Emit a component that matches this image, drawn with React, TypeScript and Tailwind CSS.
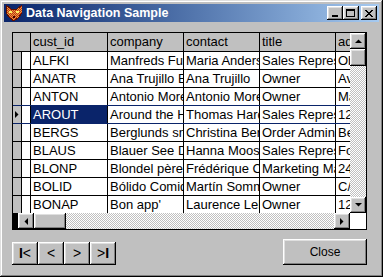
import React from 'react';

const raised =
  'bg-[#c0c0c0] shadow-[inset_-1px_-1px_#000,inset_1px_1px_#fff,inset_-2px_-2px_#808080,inset_2px_2px_#dfdfdf]';

const track = 'bg-[repeating-conic-gradient(#c0c0c0_0_25%,#fff_0_50%)] bg-[length:2px_2px]';

const rows = [
  ['ALFKI', 'Manfreds Futterkiste', 'Maria Anders', 'Sales Representative', 'Obere Str. 57'],
  ['ANATR', 'Ana Trujillo Emparedados', 'Ana Trujillo', 'Owner', 'Avda. de la Constitución 2222'],
  ['ANTON', 'Antonio Moreno Taquería', 'Antonio Moreno', 'Owner', 'Mataderos 2312'],
  ['AROUT', 'Around the Horn', 'Thomas Hardy', 'Sales Representative', '120 Hanover Sq.'],
  ['BERGS', 'Berglunds snabbköp', 'Christina Berglund', 'Order Administrator', 'Berguvsvägen 8'],
  ['BLAUS', 'Blauer See Delikatessen', 'Hanna Moos', 'Sales Representative', 'Forsterstr. 57'],
  ['BLONP', 'Blondel père et fils', 'Frédérique Citeaux', 'Marketing Manager', '24, place Kléber'],
  ['BOLID', 'Bólido Comidas preparadas', 'Martín Sommer', 'Owner', 'C/ Araquil, 67'],
  ['BONAP', "Bon app'", 'Laurence Lebihan', 'Owner', '12, rue des Bouchers'],
];

const widths = ['w-[77px]', 'w-[76px]', 'w-[76px]', 'w-[76px]', 'flex-1'];

function Arrow({ dir }: { dir: 'up' | 'down' | 'left' | 'right' }) {
  const pts = {
    up: '0,4 7,4 3.5,0.5',
    down: '0,0 7,0 3.5,3.5',
    left: '4,0 4,7 0.5,3.5',
    right: '0,0 0,7 3.5,3.5',
  }[dir];
  const vert = dir === 'up' || dir === 'down';
  return (
    <svg width={vert ? 7 : 4} height={vert ? 4 : 7} viewBox={vert ? '0 0 7 4' : '0 0 4 7'}>
      <polygon points={pts} fill="#000" />
    </svg>
  );
}

function FoxIcon() {
  return (
    <svg width="16" height="16" viewBox="0 0 16 16" shapeRendering="crispEdges">
      <defs>
        <pattern id="dither" width="2" height="2" patternUnits="userSpaceOnUse">
          <rect width="2" height="2" fill="#e8a040" />
          <rect width="1" height="1" fill="#c03010" />
          <rect x="1" y="1" width="1" height="1" fill="#c03010" />
        </pattern>
      </defs>
      <polygon points="0,0 5,4 11,4 16,0 16,8 12,13 8,16 4,13 0,8" fill="url(#dither)" stroke="#601000" strokeWidth="1" />
      <rect x="3" y="6" width="3" height="2" fill="#fff060" />
      <rect x="10" y="6" width="3" height="2" fill="#fff060" />
      <rect x="7" y="11" width="2" height="2" fill="#400000" />
    </svg>
  );
}

function TitleButton({ children }: { children: React.ReactNode }) {
  return <div className={`${raised} w-[16px] h-[14px] flex items-center justify-center`}>{children}</div>;
}

export default function App() {
  return (
    <div className="w-[383px] h-[277px] bg-[#c0c0c0] p-[4px] flex flex-col font-['Liberation_Sans',Arial,sans-serif] shadow-[inset_-1px_-1px_#000,inset_1px_1px_#dfdfdf,inset_-2px_-2px_#808080,inset_2px_2px_#fff]">
      <div className="h-[18px] bg-linear-to-r from-[#0a246a] to-[#a6caf0] flex items-center pl-[2px] pr-[2px]">
        <FoxIcon />
        <span className="ml-[4px] text-white font-bold text-[12.5px] leading-none">Data Navigation Sample</span>
        <div className="ml-auto flex items-center">
          <TitleButton>
            <div className="w-[6px] h-[2px] bg-black mt-[6px] -ml-[1px]" />
          </TitleButton>
          <TitleButton>
            <div className="w-[9px] h-[8px] border border-black border-t-2 -ml-[1px]" />
          </TitleButton>
          <div className="w-[2px]" />
          <TitleButton>
            <svg width="8" height="7" viewBox="0 0 8 7" className="-ml-[1px]" shapeRendering="crispEdges">
              <path d="M0 0h2v1h-2zM6 0h2v1h-2zM1 1h2v1h-2zM5 1h2v1h-2zM2 2h4v1h-4zM3 3h2v1h-2zM2 4h4v1h-4zM1 5h2v1h-2zM5 5h2v1h-2zM0 6h2v1h-2zM6 6h2v1h-2z" fill="#000" />
            </svg>
          </TitleButton>
        </div>
      </div>

      <div className="mt-[10px] ml-[8px] w-[355px] h-[198px] border border-black flex flex-col bg-white text-[13px] text-black">
        <div className="flex h-[180px]">
          <div className="w-[337px] flex flex-col overflow-hidden">
            <div className="flex h-[19px] shrink-0 border-b border-black bg-[#c0c0c0]">
              <div className="w-[18px] shrink-0 border-r border-black" />
              {['cust_id', 'company', 'contact', 'title', 'address'].map((h, i) => (
                <div
                  key={h}
                  className={`${widths[i]} shrink-0 overflow-hidden whitespace-nowrap pl-[2px] leading-[18px] ${i < 4 ? 'border-r border-black' : ''}`}
                >
                  {h}
                </div>
              ))}
            </div>
            <div className="h-[161px] overflow-hidden">
              {rows.map((r, ri) => {
                const sel = ri === 3;
                const navyLine = ri === 2 || ri === 3;
                return (
                  <div
                    key={r[0]}
                    className={`flex h-[18px] border-b ${navyLine ? 'border-[#0a246a]' : 'border-black'}`}
                  >
                    <div className="w-[9px] shrink-0 bg-[#c0c0c0] border-r border-black flex items-center justify-center">
                      {sel && <Arrow dir="right" />}
                    </div>
                    <div className="w-[9px] shrink-0 border-r border-black" />
                    {r.map((c, ci) => (
                      <div
                        key={ci}
                        className={`${widths[ci]} shrink-0 overflow-hidden whitespace-nowrap pl-[2px] leading-[17px] ${ci < 4 ? 'border-r border-black' : ''} ${sel && ci === 0 ? 'bg-[#0a246a] text-white' : ''}`}
                      >
                        {c}
                      </div>
                    ))}
                  </div>
                );
              })}
            </div>
          </div>
          <div className="w-[16px] flex flex-col">
            <div className={`${raised} h-[16px] flex items-center justify-center`}>
              <Arrow dir="up" />
            </div>
            <div className={`${raised} h-[17px]`} />
            <div className={`${track} flex-1`} />
            <div className={`${raised} h-[16px] flex items-center justify-center`}>
              <Arrow dir="down" />
            </div>
          </div>
        </div>
        <div className="flex h-[16px]">
          <div className="w-[5px] bg-black" />
          <div className={`${raised} w-[16px] flex items-center justify-center`}>
            <Arrow dir="left" />
          </div>
          <div className={`${raised} w-[32px]`} />
          <div className={`${track} flex-1`} />
          <div className={`${raised} w-[16px] flex items-center justify-center`}>
            <Arrow dir="right" />
          </div>
          <div className="w-[16px] bg-white" />
        </div>
      </div>

      <div className="mt-[9px] ml-[8px] w-[355px] flex items-end justify-between text-black">
        <div className="flex">
          {[
            <><span className="font-bold">I</span>&lt;</>,
            <>&lt;</>,
            <>&gt;</>,
            <>&gt;<span className="font-bold">I</span></>,
          ].map((l, i) => (
            <div key={i} className={`${raised} w-[26px] h-[23px] flex items-center justify-center text-[14px] leading-none pb-[1px]`}>
              {l}
            </div>
          ))}
        </div>
        <div className={`${raised} w-[84px] h-[26px] flex items-center justify-center text-[12px]`}>Close</div>
      </div>
    </div>
  );
}
